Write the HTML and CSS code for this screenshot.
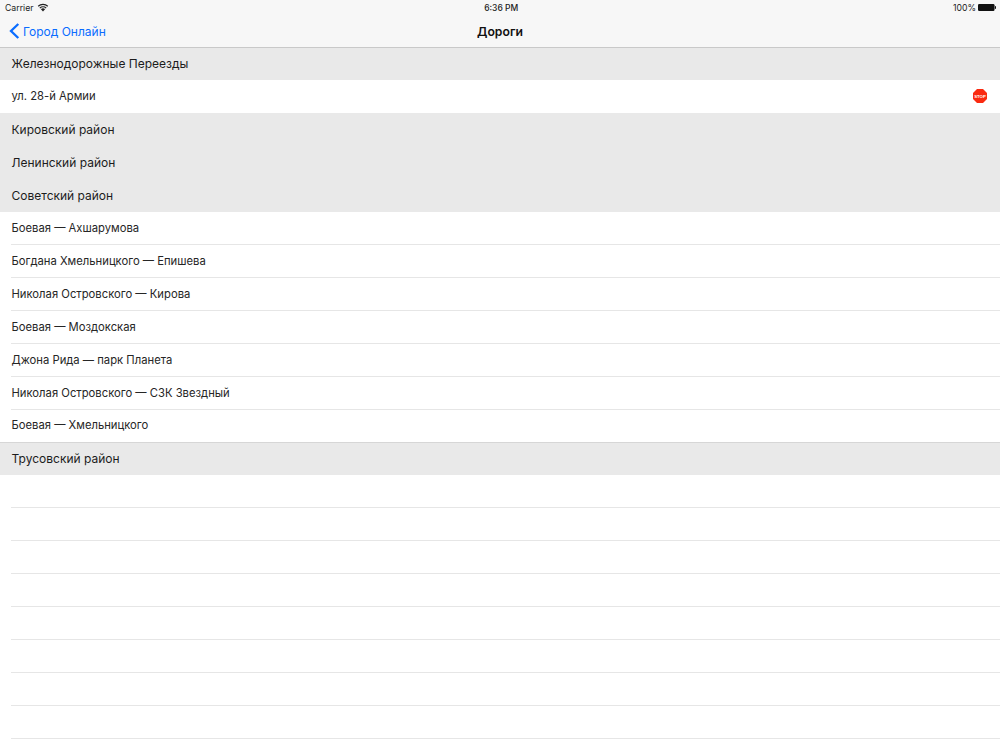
FILE: index.html
```html
<!DOCTYPE html>
<html lang="ru">
<head>
<meta charset="utf-8">
<title>Дороги</title>
<link rel="stylesheet" href="styles.css">
</head>
<body>
<header class="top">
  <div class="status">
    <div class="status-left">
      <span>Carrier</span>
      <svg class="wifi" width="12" height="9" viewBox="0 0 12 9"><path d="M6 8.6 3.9 6.3a3 3 0 0 1 4.2 0z" fill="#222"/><path d="M2.8 5.1a4.6 4.6 0 0 1 6.4 0M1.2 3.3a7 7 0 0 1 9.6 0" fill="none" stroke="#222" stroke-width="1.2"/></svg>
    </div>
    <div class="status-time">6:36 PM</div>
    <div class="status-right">
      <span>100%</span>
      <svg class="battery" width="18" height="7" viewBox="0 0 18 7"><rect width="16.5" height="7" rx="1.2" fill="#111"/><rect x="16.8" y="2.2" width="1.2" height="2.6" fill="#111"/></svg>
    </div>
  </div>
  <nav class="nav">
    <a class="back">
      <svg class="chevron" width="11" height="16" viewBox="0 0 11 16"><path d="M9.3 1 2 8l7.3 7" fill="none" stroke="#0a6cff" stroke-width="2.3"/></svg>
      <span>Город Онлайн</span>
    </a>
    <div class="title">Дороги</div>
  </nav>
</header>
<main class="list">
  <div class="section">Железнодорожные Переезды</div>
  <div class="row row-last"><span>ул. 28-й Армии</span>
    <svg class="stop" width="16" height="16" viewBox="0 0 16 16"><polygon points="5,1 11,1 15,5 15,11 11,15 5,15 1,11 1,5" fill="#fa2a10"/><text x="8" y="9.6" text-anchor="middle" class="stop-text">STOP</text></svg>
  </div>
  <div class="section">Кировский район</div>
  <div class="section">Ленинский район</div>
  <div class="section">Советский район</div>
  <div class="row"><span>Боевая — Ахшарумова</span></div>
  <div class="row"><span>Богдана Хмельницкого — Епишева</span></div>
  <div class="row"><span>Николая Островского — Кирова</span></div>
  <div class="row"><span>Боевая — Моздокская</span></div>
  <div class="row"><span>Джона Рида — парк Планета</span></div>
  <div class="row"><span>Николая Островского — СЗК Звездный</span></div>
  <div class="row row-last"><span>Боевая — Хмельницкого</span></div>
  <div class="section section-rule">Трусовский район</div>
  <div class="row"></div>
  <div class="row"></div>
  <div class="row"></div>
  <div class="row"></div>
  <div class="row"></div>
  <div class="row"></div>
  <div class="row"></div>
  <div class="row"></div>
</main>
</body>
</html>
```
FILE: styles.css
```css
* { box-sizing: border-box; }
html, body { margin: 0; padding: 0; height: 100%; overflow: hidden; background: #fff; }
body { font-family: Inter, "Liberation Sans", sans-serif; color: #1c1c1c; width: 1000px; height: 750px; }
.top { height: 48px; background: #f7f7f7; border-bottom: 1px solid #c9c9c9; position: relative; z-index: 1; }
.status { height: 15px; padding: 0 4px 0 5px; display: flex; align-items: center; justify-content: space-between; font-size: 8.7px; position: relative; }
.status-left, .status-right { display: flex; align-items: center; }
.status-left { gap: 4px; }
.status-right { gap: 2px; }
.status-time { font-weight: 500; font-size: 8.5px; }
.nav { height: 32px; display: flex; align-items: center; justify-content: center; position: relative; }
.back { position: absolute; left: 9px; top: 0; height: 32px; display: flex; align-items: center; gap: 3px; color: #0a6cff; font-size: 12px; }
.title { font-weight: 600; font-size: 12.2px; color: #111; }
.list { margin-top: -0.45px; }
.section { height: 32.92px; background: #e9e9e9; display: flex; align-items: center; padding: 0 0 1px 11.5px; font-size: 12px; color: #1c1c1c; }
.section-rule { border-top: 1px solid #d6d6d6; }
.row { height: 32.92px; padding: 0 12px 1px 11.5px; display: flex; align-items: center; justify-content: space-between; font-size: 11.25px; background: linear-gradient(#e6e6e6,#e6e6e6) left 11px bottom 0 / calc(100% - 11px) 1px no-repeat; color: #262626; }
.row-last { background: none; }
.stop-text { font: 700 4.3px "Liberation Sans", sans-serif; fill: #fff; }
```
